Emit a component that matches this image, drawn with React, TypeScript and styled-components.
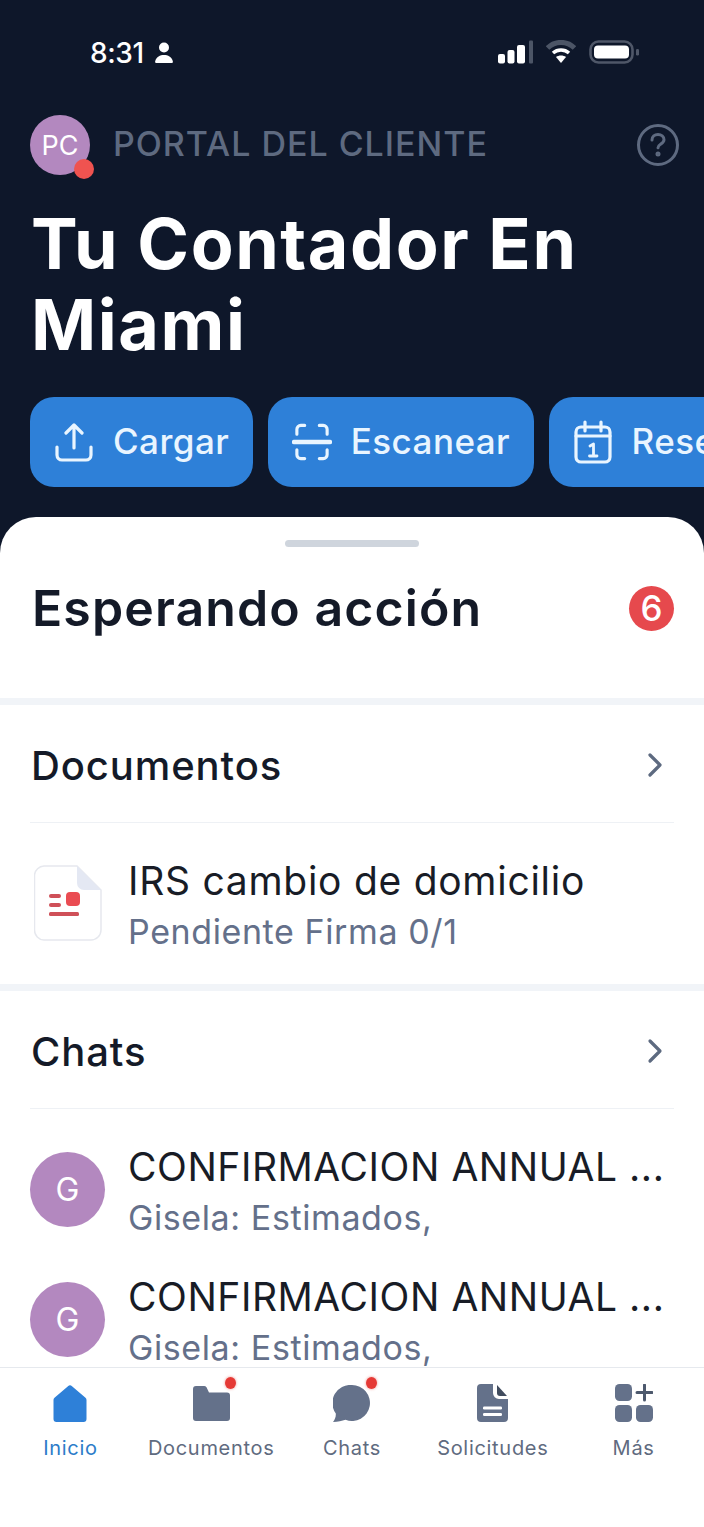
import React from "react";
import styled, { createGlobalStyle } from "styled-components";

const Global = createGlobalStyle`
  html, body { margin: 0; padding: 0; background: #fff; }
  * { box-sizing: border-box; }
  body { font-family: Inter, "Liberation Sans", sans-serif; -webkit-font-smoothing: antialiased; }
`;

const Phone = styled.div`
  width: 704px; height: 1527px; display: flex; flex-direction: column;
  overflow: hidden; background: #0e172a;
`;
const Header = styled.header`
  height: 547px; margin-bottom: -30px; flex: none; background: #0e172a; overflow: hidden;
`;
const StatusBar = styled.div`
  height: 115px; padding: 37px 65px 0 90px; display: flex; justify-content: space-between; align-items: flex-start;
  color: #fff;
`;
const Time = styled.div`
  display: flex; align-items: center; gap: 11px; font-size: 28px; font-weight: 500; line-height: 30px; letter-spacing: -0.4px;
  padding-top: 1px;
`;
const StatusIcons = styled.div`
  display: flex; align-items: center; gap: 13px; height: 30px;
`;
const TopRow = styled.div`
  height: 60px; padding: 0 24px 0 30px; display: flex; align-items: center;
`;
const Avatar = styled.div<{ $size: number; $font: number }>`
  width: ${p => p.$size}px; height: ${p => p.$size}px; flex: none; border-radius: 50%;
  background: #b388bf; color: #fff; font-size: ${p => p.$font}px; font-weight: 400;
  display: flex; align-items: center; justify-content: center; position: relative;
`;
const ChatAvatar = styled(Avatar)`
  margin-bottom: 4px;
`;
const AvatarDot = styled.span`
  position: absolute; right: -4px; bottom: -4px; width: 20px; height: 20px; border-radius: 50%; background: #ef5350;
`;
const Eyebrow = styled.div`
  margin-left: 23px; flex: 1; font-size: 34px; line-height: 58px; height: 60px; font-weight: 500; color: #5e6a80; letter-spacing: 0.98px; white-space: nowrap;
`;
const Title = styled.h1`
  margin: 28px 0 0; padding: 0 30px 0 31px; font-size: 70px; line-height: 81px; font-weight: 650; color: #fff; letter-spacing: 1.55px;
`;
const Actions = styled.div`
  margin-top: 32px; padding-left: 30px; display: flex; gap: 14.5px; width: 1000px;
`;
const Action = styled.div`
  height: 90px; flex: none; border-radius: 24px; background: #2e80d8; color: #e9f5ff;
  display: flex; align-items: center; gap: 19px; padding: 0 24px;
  font-size: 35px; font-weight: 500; letter-spacing: 0.45px;
`;
const ActionIcon = styled.span`
  width: 40px; height: 44px; flex: none; display: flex; align-items: center; justify-content: center;
`;
const ActionLabel = styled.span`
  margin-top: -3px;
`;
const Sheet = styled.main`
  flex: 1; min-height: 0; position: relative; background: #fff; border-radius: 36px 36px 0 0; overflow: hidden;
  display: flex; flex-direction: column;
`;
const Handle = styled.div`
  width: 134px; height: 7px; margin: 23px auto 0; border-radius: 4px; background: #cfd5dd; flex: none;
`;
const SheetHead = styled.div`
  height: 158px; flex: none; padding: 0 30px 29px 32px; display: flex; align-items: center; justify-content: space-between;
  border-bottom: 7px solid #f1f4f8;
`;
const SheetTitle = styled.h2`
  margin: 0; font-size: 50px; font-weight: 600; color: #141a28; letter-spacing: 1.1px;
`;
const Count = styled.div`
  width: 45px; height: 45px; border-radius: 50%; background: #e6494d; color: #fff; font-size: 35px; font-weight: 500;
  display: flex; align-items: center; justify-content: center;
`;
const Section = styled.section`
  flex: none; padding: 0 30px;
`;
const DocSection = styled(Section)`
  height: 286px; border-bottom: 7px solid #f1f4f8;
`;
const SectionHead = styled.div`
  height: 118px; padding-top: 3px; display: flex; align-items: center; justify-content: space-between; border-bottom: 1px solid #eef1f5;
`;
const SectionTitle = styled.h3`
  margin: 0 0 0 1px; font-size: 40px; font-weight: 500; color: #141a28; letter-spacing: 0.9px;
`;
const Row = styled.div<{ $top: number }>`
  display: flex; align-items: center; gap: 23px; margin-top: ${p => p.$top}px;
`;
const RowText = styled.div`
  min-width: 0; flex: 1;
`;
const RowTitle = styled.div`
  font-size: 39px; line-height: 44px; color: #181c26; font-weight: 400; letter-spacing: 0.72px; white-space: nowrap;
`;
const ChatTitle = styled(RowTitle)`
  letter-spacing: 0.55px;
`;
const RowSub = styled.div`
  margin-top: 9px; font-size: 34px; line-height: 40px; color: #64708a; letter-spacing: 0.6px; white-space: nowrap;
`;
const DocThumb = styled.div`
  width: 75px; flex: none; display: flex; justify-content: center; padding-bottom: 6px;
`;
const TabBar = styled.nav`
  position: absolute; left: 0; right: 0; bottom: 0; height: 160px; background: #fff; border-top: 1px solid #e6e9ee;
  display: grid; grid-template-columns: repeat(5, 1fr);
`;
const Tab = styled.div<{ $active?: boolean }>`
  display: flex; flex-direction: column; align-items: center; padding-top: 10px;
  color: ${p => p.$active ? "#2c7cc9" : "#5f6b80"}; font-size: 20px; letter-spacing: 0.7px; font-weight: 400; white-space: nowrap;
`;
const TabIcon = styled.div`
  width: 50px; height: 50px; position: relative; margin-bottom: 8px; display: flex; align-items: center; justify-content: center;
`;
const TabDot = styled.span`
  position: absolute; right: 0px; top: -1px; width: 11px; height: 12px; border-radius: 50%; background: #e53935;
  box-shadow: 0 0 2px 1px rgba(229, 57, 53, 0.25);
`;

const Chevron = () => (
  <svg width="22" height="28" viewBox="0 0 22 28" fill="none" stroke="#5d6a80" strokeWidth="3.2" strokeLinecap="round" strokeLinejoin="round" style={{ marginRight: 8 }}>
    <path d="M6 4l10 10-10 10" />
  </svg>
);

const ChatRow = ({ top }: { top: number }) => (
  <Row $top={top}>
    <ChatAvatar $size={75} $font={32}>G</ChatAvatar>
    <RowText>
      <ChatTitle>CONFIRMACION ANNUAL ...</ChatTitle>
      <RowSub>Gisela: Estimados,</RowSub>
    </RowText>
  </Row>
);

export default function App() {
  return (
    <Phone>
      <Global />
      <Header>
        <StatusBar>
          <Time>
            8:31
            <svg width="18" height="22" viewBox="0 0 18 22" fill="#fff"><circle cx="9" cy="5.5" r="5" /><path d="M1 21c-1 0-1-1-.7-2.200C1.400 15 5 13 9 13s7.600 2 8.700 5.800C18 20 18 21 17 21z" /></svg>
          </Time>
          <StatusIcons>
            <svg width="35" height="24" viewBox="0 0 35 24" fill="#fff">
              <rect x="0" y="14" width="7" height="9.500" rx="2" />
              <rect x="9.500" y="10" width="7" height="13.500" rx="2" />
              <rect x="19" y="5" width="8" height="18.500" rx="2" />
              <rect x="31" y="0.500" width="4" height="23" rx="1" fill="#4c5566" />
            </svg>
            <svg width="30" height="24" viewBox="0 0 30 24" fill="none">
              <path d="M1.500 8C9 0.500 21 0.500 28.500 8" stroke="#4c5566" strokeWidth="5" />
              <path d="M7 13C11.500 9 18.500 9 23 13" stroke="#fff" strokeWidth="3.500" />
              <path d="M10 17L15 23l5-6C17.500 15 12.500 15 10 17z" fill="#fff" />
            </svg>
            <svg width="50" height="24" viewBox="0 0 50 24" fill="none">
              <rect x="1.500" y="1.500" width="42" height="21" rx="8" stroke="#4f5768" strokeWidth="2.600" />
              <rect x="5" y="5.500" width="35" height="13" rx="4" fill="#fff" />
              <rect x="47" y="9" width="3" height="6.500" rx="1.200" fill="#4f5768" />
            </svg>
          </StatusIcons>
        </StatusBar>
        <TopRow>
          <Avatar $size={60} $font={27}>
            PC
            <AvatarDot />
          </Avatar>
          <Eyebrow>PORTAL DEL CLIENTE</Eyebrow>
          <svg width="44" height="44" viewBox="0 0 44 44" fill="none" stroke="#5e6a80" strokeWidth="3" strokeLinecap="round">
            <circle cx="22" cy="22" r="19.500" />
            <path d="M16 17c0-3.500 2.700-5.500 6-5.500s6 2 6 5.300c0 4.200-6 4.200-6 8" />
            <circle cx="22" cy="31" r="1" fill="#5e6a80" />
          </svg>
        </TopRow>
        <Title>Tu Contador En<br />Miami</Title>
        <Actions>
          <Action>
            <ActionIcon>
              <svg width="38" height="39" viewBox="0 0 38 39" fill="none" stroke="#e9f5ff" strokeWidth="3.200" strokeLinecap="round" strokeLinejoin="round">
                <path d="M19 25V3M11 10l8-8 8 8" />
                <path d="M2 24v8a5 5 0 0 0 5 5h24a5 5 0 0 0 5-5v-8" />
              </svg>
            </ActionIcon>
            <ActionLabel>Cargar</ActionLabel>
          </Action>
          <Action>
            <ActionIcon>
              <svg width="41" height="38" viewBox="0 0 41 38" fill="none" stroke="#e9f5ff" strokeWidth="3.200" strokeLinecap="round" strokeLinejoin="round">
                <path d="M5 11V6a4 4 0 0 1 4-4h4M28 2h4a4 4 0 0 1 4 4v5M5 27v5a4 4 0 0 0 4 4h4M28 36h4a4 4 0 0 0 4-4v-5" />
                <path d="M2 19h37" strokeWidth="4.500" />
              </svg>
            </ActionIcon>
            <ActionLabel>Escanear</ActionLabel>
          </Action>
          <Action>
            <ActionIcon>
              <svg width="38" height="44" viewBox="0 0 38 44" fill="none" stroke="#e9f5ff" strokeWidth="3.200" strokeLinecap="round" strokeLinejoin="round">
                <rect x="2" y="7" width="34" height="35" rx="5" />
                <path d="M2 16h34M11 2v9M27 2v9" />
                <path d="M16 26l3.500-2v12M15.500 36h7.500" strokeWidth="2.800" />
              </svg>
            </ActionIcon>
            <ActionLabel>Reservar</ActionLabel>
          </Action>
        </Actions>
      </Header>
      <Sheet>
        <Handle />
        <SheetHead>
          <SheetTitle>Esperando acción</SheetTitle>
          <Count>6</Count>
        </SheetHead>
        <DocSection>
          <SectionHead>
            <SectionTitle>Documentos</SectionTitle>
            <Chevron />
          </SectionHead>
          <Row $top={36}>
            <DocThumb>
              <svg width="68" height="76" viewBox="0 0 68 76" fill="none">
                <path d="M10 1h33l24 24v40a10 10 0 0 1-10 10H10A10 10 0 0 1 0.500 65V10A10 10 0 0 1 10 1z" fill="#fff" stroke="#e6e8ee" strokeWidth="1.500" />
                <path d="M43 1l24 24H50a7 7 0 0 1-7-7z" fill="#e4e8f3" />
                <rect x="15" y="29" width="12" height="4" rx="2" fill="#cf5058" />
                <rect x="15" y="38" width="12" height="4" rx="2" fill="#cf5058" />
                <rect x="32" y="27" width="14" height="14" rx="4" fill="#ea4c52" />
                <rect x="15" y="47" width="30" height="4" rx="1.500" fill="#cf5058" />
              </svg>
            </DocThumb>
            <RowText>
              <RowTitle>IRS cambio de domicilio</RowTitle>
              <RowSub>Pendiente Firma 0/1</RowSub>
            </RowText>
          </Row>
        </DocSection>
        <Section>
          <SectionHead>
            <SectionTitle>Chats</SectionTitle>
            <Chevron />
          </SectionHead>
          <ChatRow top={36} />
          <ChatRow top={37} />
        </Section>
        <TabBar>
          <Tab $active>
            <TabIcon>
              <svg width="34" height="37" viewBox="0 0 34 37"><path d="M15 1.200a3 3 0 0 1 4 0l13.500 11.500a3 3 0 0 1 1 2.300V34a3 3 0 0 1-3 3H3.500a3 3 0 0 1-3-3V15a3 3 0 0 1 1-2.300z" fill="#2e80d8" /></svg>
            </TabIcon>
            Inicio
          </Tab>
          <Tab>
            <TabIcon>
              <svg width="37" height="35" viewBox="0 0 37 35"><path d="M3 0h8a3 3 0 0 1 2.500 1.300L16 6.500h18a3 3 0 0 1 3 3V32a3 3 0 0 1-3 3H3a3 3 0 0 1-3-3V3a3 3 0 0 1 3-3z" fill="#64718a" /></svg>
              <TabDot />
            </TabIcon>
            Documentos
          </Tab>
          <Tab>
            <TabIcon>
              <svg width="37" height="37" viewBox="0 0 37 37"><path d="M19 0a18 18 0 1 1-6.500 34.800C9 36 5 36.800 0 37c2-2.500 3-5 2.800-8.500A18 18 0 0 1 19 0z" fill="#64718a" /></svg>
              <TabDot />
            </TabIcon>
            Chats
          </Tab>
          <Tab>
            <TabIcon>
              <svg width="31" height="38" viewBox="0 0 31 38">
                <path d="M4 0h12v9a6 6 0 0 0 6 6h9v19a4 4 0 0 1-4 4H4a4 4 0 0 1-4-4V4a4 4 0 0 1 4-4z" fill="#64718a" />
                <path d="M20 1l10 11h-7a3 3 0 0 1-3-3z" fill="#414c5e" />
                <rect x="6" y="22.500" width="19" height="3" rx="1.200" fill="#fff" />
                <rect x="6" y="29" width="19" height="3" rx="1.200" fill="#fff" />
              </svg>
            </TabIcon>
            Solicitudes
          </Tab>
          <Tab>
            <TabIcon>
              <svg width="38" height="38" viewBox="0 0 38 38" fill="#64718a">
                <rect x="0" y="0" width="17" height="17" rx="4.500" />
                <rect x="0" y="21" width="17" height="17" rx="4.500" />
                <rect x="21" y="21" width="17" height="17" rx="4.500" />
                <path d="M29.500 1v15M22 8.500h15" stroke="#4d596d" strokeWidth="3" strokeLinecap="round" />
              </svg>
            </TabIcon>
            Más
          </Tab>
        </TabBar>
      </Sheet>
    </Phone>
  );
}
